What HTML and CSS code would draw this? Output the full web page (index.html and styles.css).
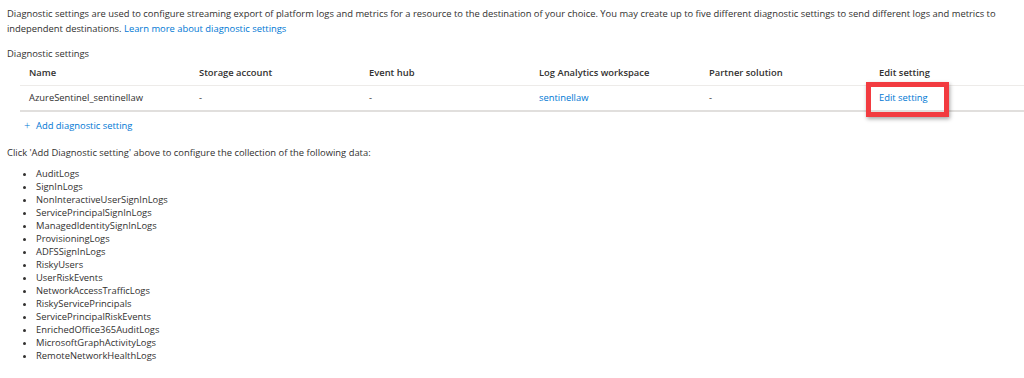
FILE: index.html
```html
<!DOCTYPE html>
<html lang="en">
<head>
  <meta charset="UTF-8">
  <title>Diagnostic settings</title>
  <link rel="stylesheet" href="styles.css">
</head>
<body>
  <div class="page">
    <p class="intro">Diagnostic settings are used to configure streaming export of platform logs and metrics for a resource to the destination of your choice. You may create up to five different diagnostic settings to send different logs and metrics to independent destinations. <a href="#">Learn more about diagnostic settings</a></p>

    <div class="section-label">Diagnostic settings</div>

    <table class="settings">
      <thead>
        <tr>
          <th>Name</th>
          <th>Storage account</th>
          <th>Event hub</th>
          <th>Log Analytics workspace</th>
          <th>Partner solution</th>
          <th>Edit setting</th>
        </tr>
      </thead>
      <tbody>
        <tr>
          <td>AzureSentinel_sentinellaw</td>
          <td>-</td>
          <td>-</td>
          <td><a href="#">sentinellaw</a></td>
          <td>-</td>
          <td class="edit-cell"><a href="#">Edit setting</a><span class="highlight"></span></td>
        </tr>
      </tbody>
    </table>

    <a class="add-link" href="#"><span class="plus">+</span>Add diagnostic setting</a>

    <p class="hint">Click 'Add Diagnostic setting' above to configure the collection of the following data:</p>

    <ul class="data-list">
      <li>AuditLogs</li>
      <li>SignInLogs</li>
      <li>NonInteractiveUserSignInLogs</li>
      <li>ServicePrincipalSignInLogs</li>
      <li>ManagedIdentitySignInLogs</li>
      <li>ProvisioningLogs</li>
      <li>ADFSSignInLogs</li>
      <li>RiskyUsers</li>
      <li>UserRiskEvents</li>
      <li>NetworkAccessTrafficLogs</li>
      <li>RiskyServicePrincipals</li>
      <li>ServicePrincipalRiskEvents</li>
      <li>EnrichedOffice365AuditLogs</li>
      <li>MicrosoftGraphActivityLogs</li>
      <li>RemoteNetworkHealthLogs</li>
    </ul>
  </div>
</body>
</html>
```

FILE: styles.css
```css
* {
  box-sizing: border-box;
  margin: 0;
  padding: 0;
}
html {
  background-color: #fff;
}
body {
  color: #323130;
  font-family: 'Open Sans', sans-serif;
  font-size: 9.4px;
  line-height: 13px;
  overflow: hidden;
}
a {
  color: #0078d4;
  text-decoration: none;
}
.page {
  padding: 6px 0 0 7px;
}
.intro {
  line-height: 15px;
  padding-right: 12px;
}
.section-label {
  margin-top: 11px;
}
.settings {
  margin-left: 13px;
  border-collapse: collapse;
  table-layout: fixed;
  width: 1020px;
}
.settings th,
.settings td {
  width: 169.5px;
  text-align: left;
  padding: 0 9px;
  white-space: nowrap;
}
.settings th {
  font-weight: 600;
  height: 25px;
  border-bottom: 1px solid #edebe9;
  vertical-align: middle;
}
.settings td {
  height: 26px;
  border-bottom: 2px solid #e1dfdd;
}
.edit-cell {
  position: relative;
}
.highlight {
  position: absolute;
  left: -4px;
  top: -4px;
  width: 83px;
  height: 35px;
  border: 5px solid #f23b40;
  box-shadow: 1px 2px 4px rgba(0, 0, 0, 0.35);
}
.add-link {
  display: inline-block;
  margin: 6px 0 0 17px;
}
.plus {
  display: inline-block;
  width: 12px;
  font-size: 11px;
  font-weight: 300;
}
.hint {
  margin-top: 14px;
}
.data-list {
  margin-top: 8px;
  padding-left: 29px;
}
```
